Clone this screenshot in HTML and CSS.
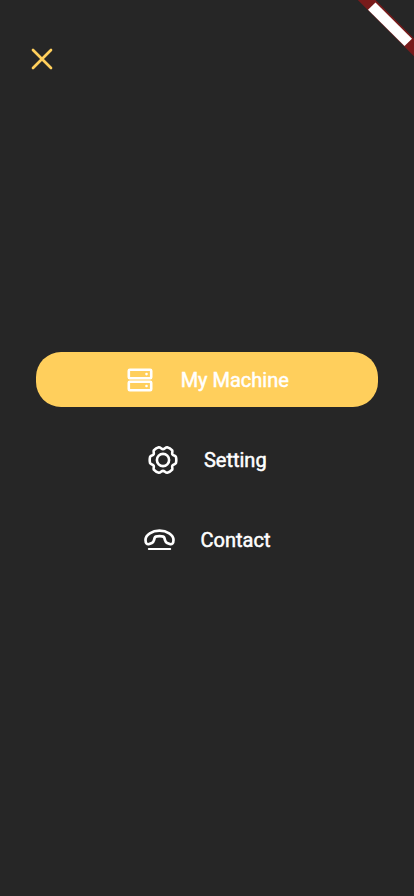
FILE: index.html
```html
<!DOCTYPE html>
<html lang="en">
<head>
<meta charset="utf-8">
<title>Menu</title>
<link rel="stylesheet" href="styles.css">
</head>
<body>
<main class="screen">
  <svg class="ribbon" viewBox="0 0 60 60" aria-hidden="true">
    <path d="M3.8 0H21.5L60 38.5V56.2Z" fill="#781b1b"/>
    <path d="M21.5 2.5L58 38.7L50.5 46L14 9.8Z" fill="#fff"/>
  </svg>
  <header class="top">
    <button class="close" aria-label="Close">
      <svg width="22" height="22" viewBox="0 0 22 22"><path d="M2 2L20 20M20 2L2 20" stroke="#ffcf5c" stroke-width="2.7" stroke-linecap="round"/></svg>
    </button>
  </header>
  <nav class="menu">
    <a class="item active">
      <svg class="machine" width="26" height="24" viewBox="0 0 26 24" fill="none" stroke="#fff" stroke-width="2.6">
        <rect x="1.8" y="1.8" width="22.4" height="8.4" rx="1"/>
        <rect x="1.8" y="13.8" width="22.4" height="8.4" rx="1"/>
        <circle cx="19.5" cy="6.1" r="1.3" fill="#fff" stroke="none"/>
        <circle cx="19.5" cy="18" r="1.3" fill="#fff" stroke="none"/>
      </svg>
      <span>My Machine</span>
    </a>
    <a class="item setting">
      <svg class="gear" width="30" height="30" viewBox="-15 -15 30 30" fill="none" stroke="#fff" stroke-width="2.6" stroke-linejoin="round">
        <circle r="6.1"/>
        <path d="M12.9 -3.2Q13.7 0 12.9 3.2C12.1 4.7 10.1 4.3 9.4 5.6C8.7 6.9 9.8 8.3 9.2 9.6Q7 12.1 4.2 12.7C2.4 12.9 1.7 10.9 0 10.9C-1.7 10.9 -2.4 12.9 -4.2 12.7Q-7 12.1 -9.2 9.6C-9.8 8.3 -8.7 6.9 -9.4 5.6C-10.1 4.3 -12.1 4.7 -12.9 3.2Q-13.7 0 -12.9 -3.2C-12.1 -4.7 -10.1 -4.3 -9.4 -5.6C-8.7 -6.9 -9.8 -8.3 -9.2 -9.6Q-7 -12.1 -4.2 -12.7C-2.4 -12.9 -1.7 -10.9 0 -10.9C1.7 -10.9 2.4 -12.9 4.2 -12.7Q7 -12.1 9.2 -9.6C9.8 -8.3 8.7 -6.9 9.4 -5.6C10.1 -4.3 12.1 -4.7 12.9 -3.2Z"/>
      </svg>
      <span>Setting</span>
    </a>
    <a class="item">
      <svg class="phone" width="32" height="24" viewBox="0.5 0 32 24" fill="none" stroke="#fff" stroke-width="2.7" stroke-linecap="round" stroke-linejoin="round">
        <path d="M2 12C2 6.5 8.8 2.7 16 2.7S30 6.5 30 12C30 15.5 28.3 16.8 26.3 16L23.6 14.9C22.1 14.3 21.8 13.2 21.4 11.8L20.8 9.7C20.4 8.5 18.6 8.2 16 8.2S11.6 8.5 11.2 9.7L10.6 11.8C10.2 13.2 9.9 14.3 8.4 14.9L5.7 16C3.7 16.8 2 15.5 2 12Z"/>
        <path d="M5.3 21H26.7" stroke-width="2"/>
      </svg>
      <span>Contact</span>
    </a>
  </nav>
</main>
</body>
</html>
```
FILE: styles.css
```css
* { box-sizing: border-box; }
body {
  margin: 0;
  background: #262626;
  color: #fff;
  font-family: Roboto, sans-serif;
}
.screen {
  position: relative;
  height: 896px;
  overflow: hidden;
}
.ribbon {
  position: absolute;
  top: 0;
  right: 0;
  width: 60px;
  height: 60px;
}
.top {
  height: 352px;
  padding: 48px 31px 0;
}
.close {
  display: block;
  width: 22px;
  height: 22px;
  padding: 0;
  border: 0;
  background: none;
}
.close svg { display: block; }
.menu {
  display: flex;
  flex-direction: column;
  gap: 25px;
  padding: 0 36px;
}
.item {
  display: flex;
  align-items: center;
  justify-content: center;
  height: 55px;
  border-radius: 25px;
  font-size: 20px;
  font-weight: 400;
  line-height: 24px;
  -webkit-text-stroke: 0.5px #fff;
}
.item svg { -webkit-text-stroke: 0; }
.active {
  padding-left: 2px;
  background: #ffcf5c;
}
.setting { padding-left: 0.6px; }
.machine { margin-right: 27.5px; }
.gear { margin-right: 26px; }
.phone { margin-right: 25px; }
```
